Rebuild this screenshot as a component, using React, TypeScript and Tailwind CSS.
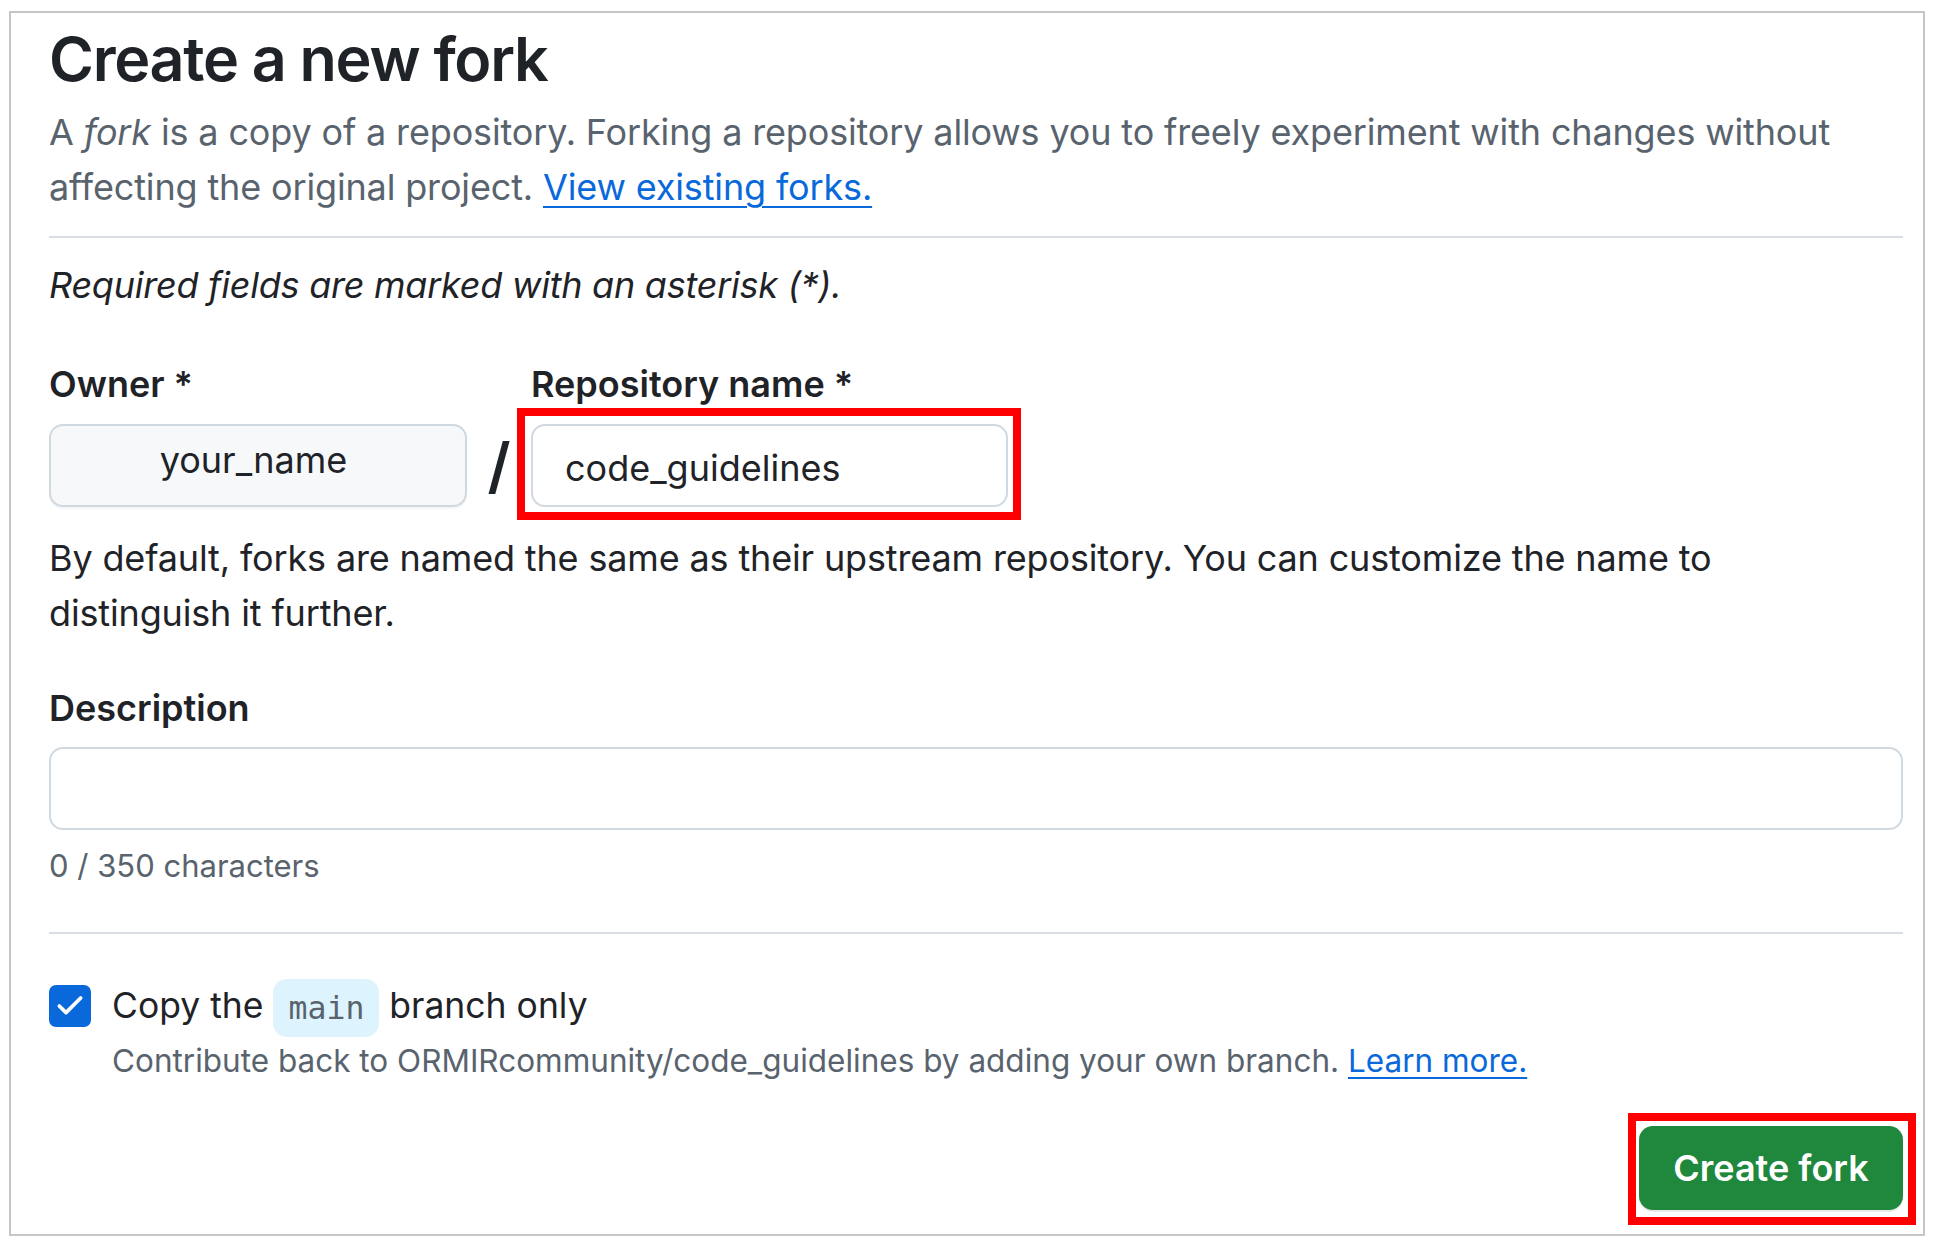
import { Check } from 'lucide-react';

export default function App() {
    return (
        <div className="min-h-screen bg-white pl-[9px] pt-[11px] font-['Inter','Noto_Sans',sans-serif] text-[#1f2328]">
            <div className="w-[1916px] h-[1225px] border-2 border-[#c6c6c6] pl-[38px] pr-[20px] pt-[8px]">
                <h1 className="text-[61px] leading-[76px] font-semibold tracking-[-1.3px]">Create a new fork</h1>
                <p className="mt-[8px] text-[36px] leading-[55px] tracking-[-0.15px] text-[#59636e]">
                    A <em>fork</em> is a copy of a repository. Forking a repository allows you to freely experiment with changes without
                    affecting the original project.{' '}
                    <a href="#" className="text-[#0969da] underline underline-offset-[6px] decoration-2">View existing forks.</a>
                </p>
                <div className="mt-[21px] h-[2px] bg-[#d8dee4]" />
                <p className="mt-[20px] text-[36px] leading-[55px] tracking-[-0.25px] italic">Required fields are marked with an asterisk (*).</p>

                {/* Owner / repository name */}
                <div className="mt-[44px] flex items-start">
                    <div className="flex flex-col">
                        <label className="text-[36px] leading-[55px] font-semibold">Owner *</label>
                        <button className="mt-[12px] h-[83px] w-[418px] rounded-[14px] border-2 border-[#d1d9e0] bg-[#f6f8fa] pr-[9px] pb-[11px] text-[36px] shadow-[0_2px_0_rgba(31,35,40,0.04)]">
                            your_name
                        </button>
                    </div>
                    <div className="mt-[67px] flex h-[83px] w-[64px] items-center justify-center text-[61px] font-semibold leading-none">/</div>
                    <div className="flex flex-col">
                        <label className="text-[36px] leading-[55px] font-semibold">Repository name *</label>
                        <div className="relative mt-[12px]">
                            <input
                                defaultValue="code_guidelines"
                                className="h-[83px] w-[477px] rounded-[14px] border-2 border-[#d1d9e0] bg-white px-[32px] pt-[4px] text-[36px] text-[#1f2328] outline-none"
                            />
                            <div className="pointer-events-none absolute -left-[14px] -right-[13px] -top-[16px] -bottom-[13px] border-[8px] border-[#ff0000]" />
                        </div>
                    </div>
                </div>
                <p className="mt-[24px] text-[36px] leading-[55px] tracking-[-0.15px]">
                    By default, forks are named the same as their upstream repository. You can customize the name to distinguish it further.
                </p>

                {/* Description */}
                <label className="mt-[40px] block text-[36px] leading-[55px] font-semibold">Description</label>
                <input className="mt-[11px] block h-[83px] w-full rounded-[14px] border-2 border-[#d1d9e0] bg-white px-[24px] text-[36px] outline-none" />
                <div className="mt-[13px] text-[31px] leading-[46px] text-[#59636e]">0 / 350 characters</div>
                <div className="mt-[43px] h-[2px] bg-[#d8dee4]" />

                {/* Branch option */}
                <div className="mt-[46px] flex items-start gap-[21px]">
                    <div className="mt-[5px] flex h-[42px] w-[42px] shrink-0 items-center justify-center rounded-[7px] bg-[#0969da]">
                        <Check size={32} strokeWidth={2.75} className="text-white" />
                    </div>
                    <div className="flex flex-col">
                        <div className="text-[35.5px] leading-[52px]">
                            Copy the{' '}
                            <span className="-my-[4px] inline-flex h-[58px] items-center rounded-[14px] bg-[#ddf4ff] px-[15px] align-middle font-['DejaVu_Sans_Mono',monospace] text-[31.5px] text-[#59636e]">
                                main
                            </span>{' '}
                            branch only
                        </div>
                        <div className="mt-[5px] text-[31.5px] leading-[46px] text-[#59636e]">
                            Contribute back to ORMIRcommunity/code_guidelines by adding your own branch.{' '}
                            <a href="#" className="text-[#0969da] underline underline-offset-[5px] decoration-2">Learn more.</a>
                        </div>
                    </div>
                </div>

                <div className="mt-[42px] flex justify-end">
                    <div className="relative">
                        <button className="h-[84px] w-[264px] rounded-[14px] bg-[#1f883d] text-[36px] font-semibold text-white shadow-[0_2px_0_rgba(31,35,40,0.1)]">
                            Create fork
                        </button>
                        <div className="pointer-events-none absolute -left-[11px] -right-[13px] -top-[13px] -bottom-[15px] border-[8px] border-[#ff0000]" />
                    </div>
                </div>
            </div>
        </div>
    );
}
